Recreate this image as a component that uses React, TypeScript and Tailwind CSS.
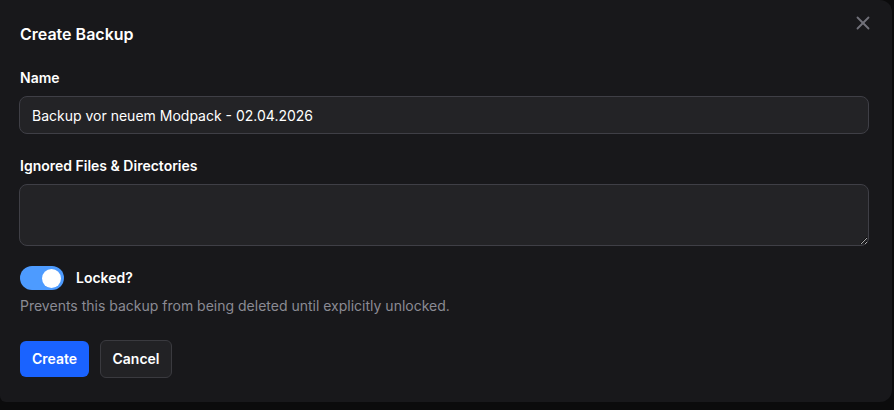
import React, { useState } from 'react';
import { X } from 'lucide-react';

const App: React.FC = () => {
  const [locked, setLocked] = useState(true);

  return (
    <div className="min-h-screen w-full bg-[#0b0b0c] font-['Inter',sans-serif] text-white">
      <div className="relative w-[892px] h-[402px] bg-[#18181b] rounded-r-xl rounded-bl-md px-5 pt-[22px]">
        <button className="absolute right-[18px] top-[12px] text-[#71717a]">
          <X size={22} strokeWidth={2} />
        </button>

        <h2 className="text-base font-semibold leading-6">Create Backup</h2>

        <label className="block mt-[22px] text-sm font-semibold leading-5">Name</label>
        <input
          defaultValue="Backup vor neuem Modpack - 02.04.2026"
          className="block mt-[8px] -ml-px w-[850px] h-[38px] rounded-lg border border-[#3f3f46] bg-[#232326] px-3 text-sm text-white outline-none"
        />

        <label className="block mt-[22px] text-sm font-semibold leading-5">Ignored Files &amp; Directories</label>
        <textarea className="block mt-[8px] -ml-px w-[850px] h-[62px] rounded-lg border border-[#3f3f46] bg-[#232326] px-3 py-2 text-sm text-white outline-none" />

        <div className="mt-[20px] flex items-center gap-3">
          <button
            onClick={() => setLocked(!locked)}
            className="flex items-center w-[44px] h-[24px] rounded-full bg-[#4d9bff] p-[3px] justify-end"
          >
            <span className="block w-[19px] h-[19px] rounded-full bg-white" />
          </button>
          <span className="text-sm font-semibold">Locked?</span>
        </div>
        <p className="mt-[6px] text-sm leading-5 text-[#8b8b94]">
          Prevents this backup from being deleted until explicitly unlocked.
        </p>

        <div className="mt-[25px] flex gap-[11px]">
          <button className="h-[36px] w-[69px] rounded-md bg-[#1a63ff] text-sm font-semibold">Create</button>
          <button className="h-[38px] w-[72px] -mt-px rounded-md border border-[#3a3a3f] bg-[#222225] text-sm font-semibold">
            Cancel
          </button>
        </div>
      </div>
    </div>
  );
};

export default App;
